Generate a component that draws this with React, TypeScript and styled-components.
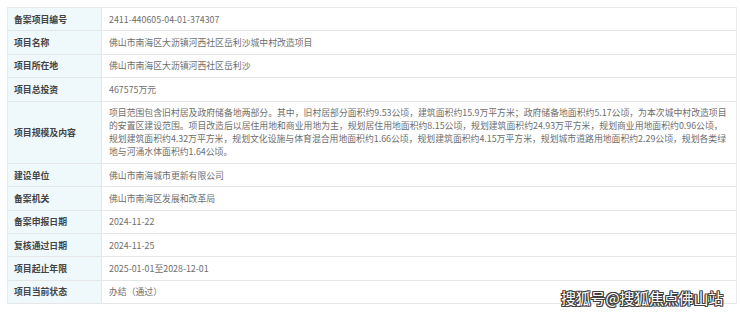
import styled, { createGlobalStyle } from 'styled-components';

const GlobalStyle = createGlobalStyle`
  html, body {
    margin: 0;
    padding: 0;
    background: #ffffff;
  }
  body {
    font-family: "Noto Sans CJK SC", "Noto Sans", sans-serif;
  }
`;

const S_Page = styled.div`
  position: relative;
  width: 740px;
  height: 315px;
  box-sizing: border-box;
  padding: 7px 3px 0 7px;
  overflow: hidden;
`;

const S_Table = styled.div`
  width: 730px;
  box-sizing: border-box;
  border: 1px solid #ebebeb;
  border-bottom: none;
`;

const S_Row = styled.div`
  display: grid;
  grid-template-columns: 94px 1fr;
  border-bottom: 1px solid #e6e6e6;
`;

const S_Label = styled.div`
  box-sizing: border-box;
  display: flex;
  align-items: center;
  padding: 4.7px 6px;
  background-color: #eff9fc;
  border-right: 1px solid #e6e6e6;
  color: #444444;
  font-size: 8.85px;
  font-weight: 700;
  line-height: 13px;
  white-space: nowrap;
`;

const S_Value = styled.div`
  box-sizing: border-box;
  padding: 4.7px 6px 4.7px 7px;
  color: #6e6e6e;
  font-size: 8.85px;
  line-height: 13px;
`;

const S_Watermark = styled.div`
  position: absolute;
  right: 17px;
  top: 289px;
  font-size: 15px;
  font-weight: 400;
  line-height: 18px;
  letter-spacing: -0.2px;
  color: #ffffff;
  text-shadow:
    1px 0 0 #404040,
    -1px 0 0 #404040,
    0 1px 0 #404040,
    0 -1px 0 #404040,
    1px 1px 0 #404040,
    -1px -1px 0 #404040,
    1px -1px 0 #404040,
    -1px 1px 0 #404040;
`;

const rows: [string, string][] = [
  ['备案项目编号', '2411-440605-04-01-374307'],
  ['项目名称', '佛山市南海区大沥镇河西社区岳利沙城中村改造项目'],
  ['项目所在地', '佛山市南海区大沥镇河西社区岳利沙'],
  ['项目总投资', '467575万元'],
  [
    '项目规模及内容',
    '项目范围包含旧村居及政府储备地两部分。其中，旧村居部分面积约9.53公顷，建筑面积约15.9万平方米；政府储备地面积约5.17公顷，为本次城中村改造项目的安置区建设范围。项目改造后以居住用地和商业用地为主，规划居住用地面积约8.15公顷，规划建筑面积约24.93万平方米，规划商业用地面积约0.96公顷，规划建筑面积约4.32万平方米，规划文化设施与体育混合用地面积约1.66公顷，规划建筑面积约4.15万平方米，规划城市道路用地面积约2.29公顷，规划各类绿地与河涌水体面积约1.64公顷。',
  ],
  ['建设单位', '佛山市南海城市更新有限公司'],
  ['备案机关', '佛山市南海区发展和改革局'],
  ['备案申报日期', '2024-11-22'],
  ['复核通过日期', '2024-11-25'],
  ['项目起止年限', '2025-01-01至2028-12-01'],
  ['项目当前状态', '办结（通过）'],
];

function App() {
  return (
    <>
      <GlobalStyle />
      <S_Page>
        <S_Table>
          {rows.map(([label, value]) => (
            <S_Row key={label}>
              <S_Label>{label}</S_Label>
              <S_Value>{value}</S_Value>
            </S_Row>
          ))}
        </S_Table>
        <S_Watermark>搜狐号@搜狐焦点佛山站</S_Watermark>
      </S_Page>
    </>
  );
}

export default App;
